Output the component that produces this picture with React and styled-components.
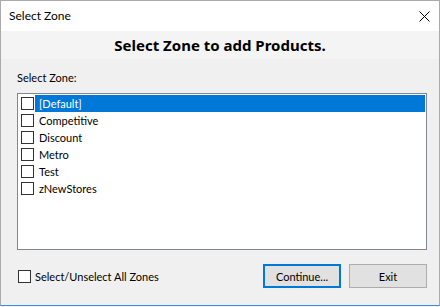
import React, { useState } from 'react';
import styled, { createGlobalStyle } from 'styled-components';

const GlobalStyle = createGlobalStyle`
  html, body {
    margin: 0;
    padding: 0;
    background: #f0f0f0;
  }
  body {
    font-family: Lato, "Segoe UI", sans-serif;
    font-size: 11px;
    color: #000;
  }
`;

const Window = styled.div`
  width: 440px;
  height: 306px;
  box-sizing: border-box;
  border: 1px solid #aaaaaa;
  border-bottom: 1px solid #3d8ee0;
  background: #f0f0f0;
  display: flex;
  flex-direction: column;
`;

const TitleBar = styled.div`
  height: 30px;
  flex-shrink: 0;
  background: #ffffff;
  display: flex;
  align-items: center;
  justify-content: space-between;
  padding: 0 8px;
`;

const Title = styled.span`
  font-size: 12px;
  line-height: 16px;
`;

const CloseBtn = styled.div`
  width: 12px;
  height: 12px;
  display: flex;
  align-items: center;
  justify-content: center;
  margin-right: 1px;
`;

const Header = styled.div`
  height: 28px;
  flex-shrink: 0;
  background: #f4f4f4;
  display: flex;
  align-items: center;
  justify-content: center;
  font-family: "Noto Sans", sans-serif;
  font-size: 15px;
  font-weight: bold;
`;

const Content = styled.div`
  flex: 1;
  display: flex;
  flex-direction: column;
  padding: 11px 12px 0 16px;
`;

const Label = styled.div`
  line-height: 16px;
  margin-bottom: 7px;
`;

const ListBox = styled.div`
  height: 157px;
  box-sizing: border-box;
  border: 1px solid #828790;
  background: #ffffff;
  padding: 1px 1px 1px 3px;
`;

const Row = styled.div`
  height: 17px;
  display: flex;
  align-items: center;
  cursor: default;
`;

const Box = styled.span`
  width: 13px;
  height: 13px;
  box-sizing: border-box;
  border: 1px solid #333333;
  background: #ffffff;
  flex-shrink: 0;
  display: flex;
  align-items: center;
  justify-content: center;
  font-size: 10px;
  line-height: 1;
`;

const ItemText = styled.span`
  flex: 1;
  height: 17px;
  line-height: 17px;
  margin-left: 1px;
  padding-left: 4px;
  background: ${p => (p.$selected ? '#0078d7' : 'transparent')};
  color: ${p => (p.$selected ? '#ffffff' : '#000000')};
`;

const Footer = styled.div`
  display: flex;
  align-items: center;
  margin-top: 14px;
`;

const AllToggle = styled.label`
  display: flex;
  align-items: center;
  gap: 4px;
  margin-left: 1px;
  flex: 1;
`;

const Button = styled.button`
  width: 78px;
  height: 24px;
  box-sizing: border-box;
  font-family: inherit;
  font-size: 11px;
  color: #000;
  background: #e1e1e1;
  border: ${p => (p.$default ? '2px solid #0078d7' : '1px solid #adadad')};
  margin-left: ${p => (p.$default ? '0' : '8px')};
  padding: 0;
`;

const zones = ['[Default]', 'Competitive', 'Discount', 'Metro', 'Test', 'zNewStores'];

function Check({ on }) {
  return <Box>{on ? '✓' : ''}</Box>;
}

export default function App() {
  const [checked, setChecked] = useState({});
  const [all, setAll] = useState(false);

  return (
    <>
      <GlobalStyle />
      <Window>
        <TitleBar>
          <Title>Select Zone</Title>
          <CloseBtn>
            <svg width="11" height="11" viewBox="0 0 11 11">
              <path d="M0.5 0.5 L10.5 10.5 M10.5 0.5 L0.5 10.5" stroke="#000" strokeWidth="1" />
            </svg>
          </CloseBtn>
        </TitleBar>
        <Header>Select Zone to add Products.</Header>
        <Content>
          <Label>Select Zone:</Label>
          <ListBox>
            {zones.map((z, idx) => (
              <Row
                key={`zone_${idx + 1}`}
                onClick={() => setChecked({ ...checked, [z]: !checked[z] })}
              >
                <Check on={checked[z]} />
                <ItemText $selected={idx === 0}>{z}</ItemText>
              </Row>
            ))}
          </ListBox>
          <Footer>
            <AllToggle onClick={() => setAll(!all)}>
              <Check on={all} />
              Select/Unselect All Zones
            </AllToggle>
            <Button $default>Continue...</Button>
            <Button>Exit</Button>
          </Footer>
        </Content>
      </Window>
    </>
  );
}
